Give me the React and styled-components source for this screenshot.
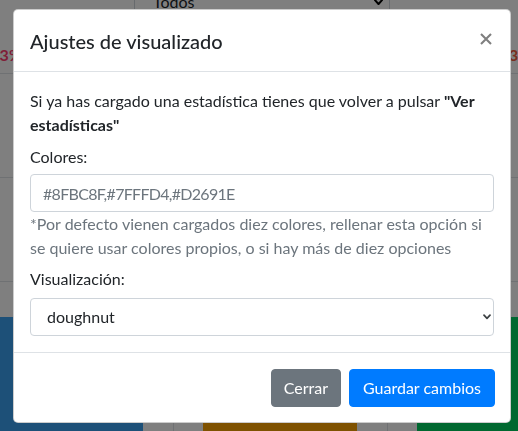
import React from "react";
import styled, { createGlobalStyle } from "styled-components";

const GlobalStyle = createGlobalStyle`
  html, body { margin: 0; padding: 0; }
  body {
    font-family: Lato, "Liberation Sans", sans-serif;
    font-size: 16px;
    line-height: 1.5;
    color: #212529;
    background: #fff;
    overflow: hidden;
  }
  * { box-sizing: border-box; }
`;

/* ---------- underlying page (dimmed by the backdrop) ---------- */

const Page = styled.div`
  height: 431px;
  overflow: hidden;
  display: flex;
  flex-direction: column;
  background: #fff;
`;

const TopBar = styled.div`
  height: 21px;
  overflow: hidden;
  display: flex;
  align-items: flex-end;
  padding-left: 134px;
`;

const FilterSelect = styled.div`
  flex: 0 0 256px;
  height: 38px;
  border: 1px solid #ced4da;
  border-radius: 4px;
  display: flex;
  align-items: center;
  justify-content: space-between;
  padding: 0 6px 0 18px;
  color: #212529;
`;

const TableRow = styled.div`
  height: ${(p) => p.$h}px;
  flex: 0 0 auto;
  border-bottom: 1px solid #dee2e6;
  display: flex;
  justify-content: space-between;
  align-items: flex-start;
  padding-top: 22px;
`;

const EdgeCell = styled.div`
  width: ${(p) => p.$w}px;
  overflow: hidden;
  display: flex;
  justify-content: ${(p) => (p.$right ? "flex-start" : "flex-end")};
  white-space: nowrap;
  font-weight: 700;
  color: ${(p) => p.$color};
`;

const Spacer = styled.div`
  flex: 0 0 35px;
`;

const Strip = styled.div`
  flex: 1 1 auto;
  display: flex;
`;

const Bar = styled.div`
  flex: 0 0 ${(p) => p.$w}px;
  background: ${(p) => p.$color};
`;

const Gap = styled.div`
  flex: 0 0 60px;
  background: linear-gradient(#dee2e6, #dee2e6) center / 1px 100% no-repeat;
`;

/* ---------- modal ---------- */

const Backdrop = styled.div`
  position: fixed;
  inset: 0;
  background: rgba(0, 0, 0, 0.5);
`;

const ModalLayer = styled.div`
  position: fixed;
  inset: 0;
  padding: 9px 0 0 13px;
`;

const Dialog = styled.div`
  width: 498px;
  background: #fff;
  border: 1px solid rgba(0, 0, 0, 0.2);
  border-radius: 5px;
  display: flex;
  flex-direction: column;
`;

const Header = styled.div`
  display: flex;
  justify-content: space-between;
  align-items: flex-start;
  padding: 16px 16px 15px;
  border-bottom: 1px solid #dee2e6;
`;

const Title = styled.h5`
  margin: 0;
  font-size: 20px;
  font-weight: 500;
  line-height: 30px;
  color: #212529;
`;

const CloseButton = styled.button`
  margin: 5px 0 0;
  padding: 0;
  width: 16px;
  height: 16px;
  border: 0;
  background: transparent;
  display: flex;
  align-items: center;
  justify-content: center;
  cursor: pointer;
`;

const Body = styled.div`
  padding: 17px 16px 16px;
  display: flex;
  flex-direction: column;
`;

const Lead = styled.p`
  margin: 0 0 8px;
  line-height: 24px;
`;

const Label = styled.label`
  display: block;
  line-height: 24px;
  margin: ${(p) => p.$mt || 0}px 0 ${(p) => p.$mb}px;
`;

const TextInput = styled.input`
  display: block;
  width: 100%;
  height: 38px;
  padding: 6px 12px;
  font-family: inherit;
  font-size: 16px;
  line-height: 24px;
  color: #495057;
  background: #fff;
  border: 1px solid #ced4da;
  border-radius: 4px;
  outline: none;
  &::placeholder {
    color: #6c757d;
    letter-spacing: -0.7px;
    opacity: 1;
  }
`;

const HelpText = styled.small`
  display: block;
  font-size: 16px;
  line-height: 24px;
  color: #6c757d;
`;

const SelectWrap = styled.div`
  position: relative;
`;

const Select = styled.select`
  display: block;
  width: 100%;
  height: 38px;
  padding: 6px 24px 6px 16px;
  font-family: inherit;
  font-size: 16px;
  line-height: 24px;
  color: #212529;
  background: #fff;
  border: 1px solid #ced4da;
  border-radius: 4px;
  appearance: none;
  outline: none;
`;

const SelectArrow = styled.svg`
  position: absolute;
  right: 3px;
  top: 16px;
  pointer-events: none;
`;

const Footer = styled.div`
  display: flex;
  justify-content: flex-end;
  align-items: center;
  padding: 12px 11px 11px 12px;
  border-top: 1px solid #dee2e6;
`;

const Button = styled.button`
  margin: 4px;
  height: 38px;
  padding: 6px ${(p) => p.$px}px;
  font-family: inherit;
  font-size: 16px;
  line-height: 24px;
  color: #fff;
  background: ${(p) => p.$bg};
  border: 1px solid ${(p) => p.$bg};
  border-radius: 4px;
  cursor: pointer;
`;

const Chevron = ({ w = 8, h = 5, color = "#212529", sw = 1.6 }) => (
  <svg width={w} height={h} viewBox={`0 0 ${w} ${h}`} style={{ display: "block" }}>
    <polyline
      points={`0.8,0.8 ${w / 2},${h - 0.8} ${w - 0.8},0.8`}
      fill="none"
      stroke={color}
      strokeWidth={sw}
      strokeLinecap="round"
      strokeLinejoin="round"
    />
  </svg>
);

export default function App() {
  return (
    <>
      <GlobalStyle />
      <Page>
        <TopBar>
          <FilterSelect>
            <span>Todos</span>
            <Chevron w={9} h={6} color="#000" sw={2} />
          </FilterSelect>
        </TopBar>
        <TableRow $h={53}>
          <EdgeCell $w={22} $color="#ff4070">33%</EdgeCell>
          <EdgeCell $w={9} $right $color="#f05a3c">33%</EdgeCell>
        </TableRow>
        <TableRow $h={104} />
        <TableRow $h={104} />
        <Spacer />
        <Strip>
          <Bar $w={143} $color="#3aa0f0" />
          <Gap />
          <Bar $w={154} $color="#ffa500" />
          <Gap />
          <Bar $w={101} $color="#00d060" />
        </Strip>
      </Page>

      <Backdrop />
      <ModalLayer>
        <Dialog role="dialog" aria-modal="true">
          <Header>
            <Title>Ajustes de visualizado</Title>
            <CloseButton aria-label="Close">
              <svg width="12" height="12" viewBox="0 0 12 12">
                <path
                  d="M1 1 L11 11 M11 1 L1 11"
                  stroke="#7f7f7f"
                  strokeWidth="2.1"
                  strokeLinecap="butt"
                />
              </svg>
            </CloseButton>
          </Header>
          <Body>
            <Lead>
              Si ya has cargado una estadística tienes que volver a pulsar{" "}
              <b>"Ver estadísticas"</b>
            </Lead>
            <Label htmlFor="colores" $mb={5}>
              Colores:
            </Label>
            <TextInput id="colores" placeholder="#8FBC8F,#7FFFD4,#D2691E" />
            <HelpText>
              *Por defecto vienen cargados diez colores, rellenar esta opción si se quiere
              usar colores propios, o si hay más de diez opciones
            </HelpText>
            <Label htmlFor="visualizacion" $mt={7} $mb={7}>
              Visualización:
            </Label>
            <SelectWrap>
              <Select id="visualizacion" defaultValue="doughnut">
                <option value="bar">bar</option>
                <option value="line">line</option>
                <option value="pie">pie</option>
                <option value="doughnut">doughnut</option>
                <option value="polarArea">polarArea</option>
                <option value="radar">radar</option>
              </Select>
              <SelectArrow width="8" height="6" viewBox="0 0 8 6">
                <polyline
                  points="1,1.2 4,4.4 7,1.2"
                  fill="none"
                  stroke="#3c4043"
                  strokeWidth="1.7"
                  strokeLinecap="round"
                  strokeLinejoin="round"
                />
              </SelectArrow>
            </SelectWrap>
          </Body>
          <Footer>
            <Button $bg="#6c757d" $px={12}>Cerrar</Button>
            <Button $bg="#007bff" $px={13}>Guardar cambios</Button>
          </Footer>
        </Dialog>
      </ModalLayer>
    </>
  );
}
